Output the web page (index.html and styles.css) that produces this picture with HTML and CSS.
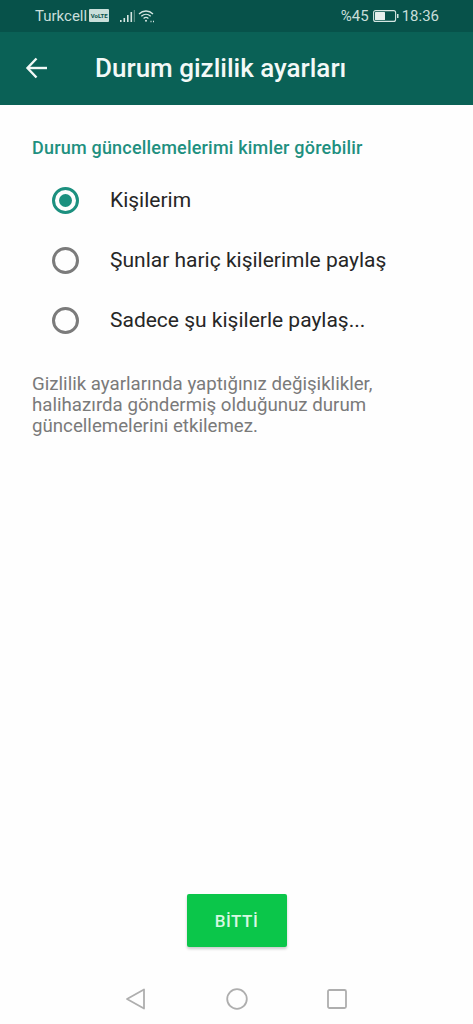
FILE: index.html
```html
<!DOCTYPE html>
<html lang="tr">
<head>
<meta charset="utf-8">
<title>Durum gizlilik ayarları</title>
<link rel="stylesheet" href="styles.css">
</head>
<body>
<div class="screen">
  <div class="status">
    <div class="status-left">
      <span>Turkcell</span>
      <span class="volte">VoLTE</span>
      <svg class="signal" width="16" height="14" viewBox="0 0 16 14"><path d="M1 11h1.600v2H1zM4.500 9h1.600v4H4.500zM8 6h1.600v7H8z" fill="#d5e6e2"/><path d="M11.500 3h1.600v10h-1.600z" fill="#d5e6e2"/><path d="M14.800 1h1v12h-1z" fill="#6f9a90"/></svg>
      <svg class="wifi" width="18" height="14" viewBox="0 0 18 14" fill="none" stroke="#d5e6e2" stroke-width="1.300"><path d="M1 5c4-4 10-4 14 0"/><path d="M3.300 7.300c2.800-2.700 6.600-2.700 9.400 0"/><path d="M5.600 9.500c1.500-1.400 3.300-1.400 4.800 0"/><circle cx="8" cy="11.800" r="1" fill="#d5e6e2" stroke="none"/><path d="M12.500 12.500h1M15 12.500h1" stroke-width="1.400"/></svg>
    </div>
    <div class="status-right">
      <span>%45</span>
      <svg class="battery" width="26" height="14" viewBox="0 0 26 14"><rect x="0.600" y="1.600" width="22" height="10.800" rx="2" fill="none" stroke="#d5e6e2" stroke-width="1.100"/><rect x="2" y="3" width="10" height="8" rx="0.500" fill="#e6efed"/><rect x="24" y="5" width="1.500" height="4" fill="#d5e6e2"/></svg>
      <span>18:36</span>
    </div>
  </div>
  <header class="appbar">
    <svg class="back" width="24" height="24" viewBox="0 0 24 24" fill="none" stroke="#f2f8f6" stroke-width="2.400"><path d="M22 12H3"/><path d="M11.500 2.500L2.500 12l9 9.500"/></svg>
    <h1 class="title">Durum gizlilik ayarları</h1>
  </header>
  <main class="content">
    <h2 class="section">Durum güncellemelerimi kimler görebilir</h2>
    <div class="options">
      <div class="option"><span class="radio on"></span><span>Kişilerim</span></div>
      <div class="option"><span class="radio"></span><span>Şunlar hariç kişilerimle paylaş</span></div>
      <div class="option"><span class="radio"></span><span>Sadece şu kişilerle paylaş...</span></div>
    </div>
    <p class="note">Gizlilik ayarlarında yaptığınız değişiklikler, halihazırda göndermiş olduğunuz durum güncellemelerini etkilemez.</p>
    <div class="actions"><button class="done">BİTTİ</button></div>
  </main>
  <nav class="navbar">
    <svg width="22" height="22" viewBox="0 0 22 22" fill="none" stroke="#aeaeae" stroke-width="1.800" stroke-linejoin="round"><path d="M19 1.500v19L2 11z"/></svg>
    <svg width="22" height="22" viewBox="0 0 22 22" fill="none" stroke="#aeaeae" stroke-width="1.800"><circle cx="11" cy="11" r="9.800"/></svg>
    <svg width="20" height="20" viewBox="0 0 20 20" fill="none" stroke="#aeaeae" stroke-width="1.800"><rect x="1" y="1" width="18" height="18" rx="1.500"/></svg>
  </nav>
</div>
</body>
</html>
```
FILE: styles.css
```css
* { box-sizing: border-box; }
html, body { margin: 0; padding: 0; }
body { font-family: Roboto, "Noto Sans", sans-serif; background: #fff; }
.screen { width: 473px; height: 1024px; display: flex; flex-direction: column; overflow: hidden; background: #fefefe; }
.status { height: 32px; flex: none; background: #07524a; color: #c9dfda; font-size: 15px; display: flex; justify-content: space-between; align-items: center; padding: 0 34px 1px 35px; }
.status-left, .status-right { display: flex; align-items: center; }
.volte { width: 20px; overflow: hidden; text-align: center; font-size: 6px; font-weight: 700; background: #c9dfda; color: #07524a; padding: 3px 0; border-radius: 1px; margin-left: 2px; line-height: 7px; }
.signal { margin-left: 10px; }
.wifi { margin-left: 3px; }
.battery { margin: 0 3px 0 4px; }
.appbar { height: 73px; flex: none; background: #0a6156; display: flex; align-items: center; padding: 0 0 1px 25px; }
.title { margin: 0 0 0 46px; font-size: 26px; font-weight: 500; color: #f3f9f7; }
.content { flex: 1; display: flex; flex-direction: column; padding: 33px 0 0; }
.section { margin: 0 0 0 32px; font-size: 18px; font-weight: 500; color: #1f9080; line-height: 19px; letter-spacing: 0.2px; }
.options { margin-top: 13px; display: flex; flex-direction: column; }
.option { height: 60px; display: flex; align-items: center; padding-left: 52px; font-size: 21px; color: #262626; }
.radio { width: 27px; height: 27px; border: 3px solid #7b7b7b; border-radius: 50%; margin-right: 31px; flex: none; }
.radio.on { border-color: #1c907f; position: relative; }
.radio.on::after { content: ""; position: absolute; left: 4px; top: 4px; width: 13px; height: 13px; background: #1c907f; border-radius: 50%; }
.note { margin: 24px 81px 0 32px; font-size: 18.700px; line-height: 21px; color: #7a7a7a; }
.actions { margin-top: auto; display: flex; justify-content: center; padding-bottom: 23px; }
.done { width: 100px; height: 53px; border: 0; border-radius: 2px; background: #0bc64a; color: #d8f8e2; font: 500 17px Roboto, sans-serif; letter-spacing: 0.5px; box-shadow: 0 2px 3px rgba(0,0,0,0.2); }
.navbar { height: 54px; flex: none; display: flex; align-items: center; padding: 3px 126px 0 125px; justify-content: space-between; }
```
